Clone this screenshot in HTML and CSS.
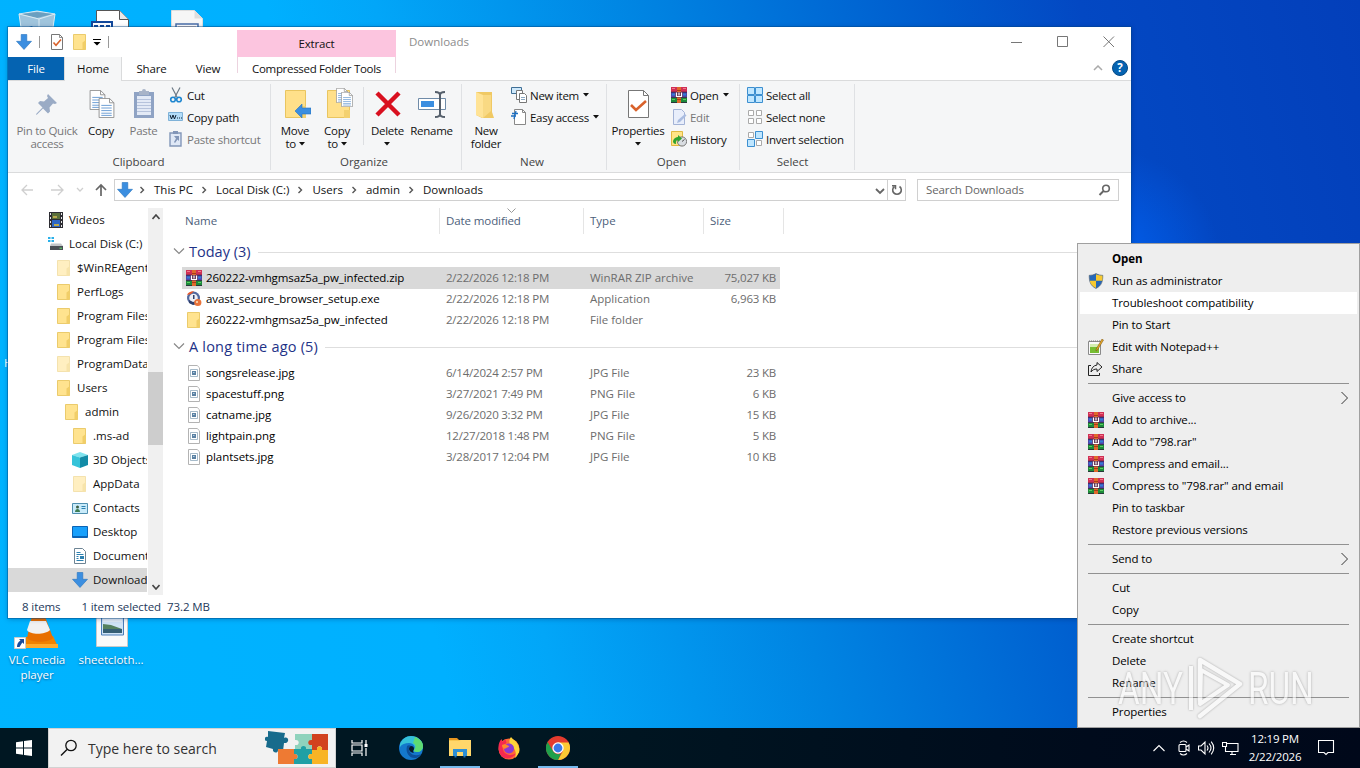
FILE: index.html
```html
<!DOCTYPE html>
<html lang="en">
<head>
  <meta charset="UTF-8">
  <meta name="viewport" content="width=device-width, initial-scale=1.0">
  <title>Downloads</title>
  <link rel="stylesheet" href="styles.css">
</head>
<body>
  <!-- shared icons -->
  <svg class="sprite">
    <symbol id="i-rar" viewBox="0 0 16 16">
      <path fill="#d02f54" d="M0 0h16v5H0z"/><path fill="#5044a8" d="M0 5h16v5.500H0z"/><path fill="#1d8a3a" d="M0 10.500h16V16H0z"/>
      <path fill="#2b1c3a" d="M0 4.800h16v.8H0zM0 10.200h16v.8H0zM0 15.200h16v.8H0z"/>
      <path fill="#f0788a" d="M1 1h3v1H1zM12 1h3v1h-3z"/><path fill="#2f7fd6" d="M1 6.500h3v2H1zM12 6.500h3v2h-3z"/><path fill="#5ccf5f" d="M1 12h3v1H1zM12 12h3v1h-3z"/>
      <path fill="#e06a2b" d="M6 0h4v16H6z"/><path fill="#a83a1c" d="M6 3h4v1H6zM6 12h4v1H6z"/><path fill="#5e2c4c" d="M4.500 5h7v5.500h-7z"/>
      <path fill="none" stroke="#fff" stroke-width="1.200" d="M5.500 5.500v4.500M5.500 9.500h5v-4M8 5.500v3"/>
    </symbol>
    <symbol id="i-folder" viewBox="0 0 16 16">
      <path fill="#ffe38f" stroke="#e6c254" stroke-width=".8" d="M1.500.500h12v15h-12z"/><path fill="#f1ce68" d="M10.500 8.500 13.800 6v9.600h-3.300z"/>
    </symbol>
    <symbol id="i-down" viewBox="0 0 16 16">
      <path fill="#3b8ee0" stroke="#2572bd" stroke-width=".6" d="M5.200.500h5.600v6.800h4.700L8 15.500.500 7.300h4.700z"/>
    </symbol>
    <symbol id="i-check" viewBox="0 0 16 16">
      <path fill="#fff" stroke="#777" d="M2.500.500h8l3 3v12h-11z"/><path fill="none" stroke="#777" stroke-width=".8" d="M10.500.500v3h3"/><path fill="none" stroke="#d9622b" stroke-width="1.600" d="m4.500 8.500 2.500 2.700L12 5.500"/>
    </symbol>
    <symbol id="i-img" viewBox="0 0 16 16">
      <path fill="#fff" stroke="#b3b3b3" d="M2.500.500h8.700l2.300 2.300v12.700h-11z"/><path fill="#fff" stroke="#8fa9bd" stroke-width=".8" d="M4.500 4.500h7v7h-7z"/><path fill="#5a80a2" d="M6 6h4v4H6z"/><path fill="#b4d1e6" d="M7 7h1.500v1H7z"/>
    </symbol>
    <symbol id="i-chev" viewBox="0 0 10 10"><path fill="none" stroke="currentColor" stroke-width="1.400" d="m3.500 2 3 3-3 3"/></symbol>
    <symbol id="i-vee" viewBox="0 0 12 12"><path fill="none" stroke="currentColor" stroke-width="1.200" d="m1 3.500 5 5 5-5"/></symbol>
    <symbol id="i-tri" viewBox="0 0 6 4"><path fill="#111" d="M0 0h6L3 3.500z"/></symbol>
    <symbol id="i-page" viewBox="0 0 18 23">
      <path fill="#fff" stroke="#888" d="M.500.500h12l5 5v17H.500z"/><path fill="none" stroke="#888" d="M12.500.500v5h5"/><path stroke="#5b93cf" d="M3 8.500h12M3 11.500h12M3 14.500h12M3 17.500h12M3 20h12"/>
    </symbol>
  </svg>

  <div class="desktop">
    <!-- desktop shortcuts -->
    <svg class="desk-icon bin" viewBox="0 0 38 40"><path fill="#9fc4dc" stroke="#dcebf3" d="m1 4 18-3 18 3-5 34H6z"/><path fill="#6a9fc0" d="m3 4 16-2 16 2-16 4z"/><path fill="none" stroke="#dcebf3" d="m1 4 20 5 16-5M21 9v30"/><path fill="#1f6fb2" d="M8 18l6-2 4 6-8 4z"/></svg>
    <svg class="desk-icon rtf" viewBox="0 0 38 40"><path fill="#fff" stroke="#555" d="M5.500.500h23l9 9v30h-32z"/><path fill="#e8e8e8" stroke="#555" d="M28.500.500v9h9"/><path fill="#12489c" d="M0 11h22v14H0z"/><path fill="#fff" d="M2 13h18v8H2z"/><path fill="#12489c" d="M3 15h4v2H3zM9 15h4v2H9zM15 15h4v2h-4z"/></svg>
    <svg class="desk-icon doc" viewBox="0 0 32 40"><path fill="#f6f6f6" stroke="#ddd" d="M.500.500h23l8 8v31H.500z"/><path fill="#ddd" d="M23.500.500v8h8z"/><path fill="#fff" stroke="#4a6ea8" stroke-width="1.500" d="M5 14h22v16H5z"/><path stroke="#d08a6a" d="M7 17h18"/></svg>
    <span class="desk-peek">H</span>
    <div class="shortcut vlc">
      <svg viewBox="0 0 46 38" width="46" height="38"><path fill="#f08200" d="m13 26-5 10h38l-5-11z"/><path fill="#ffab2b" d="M7 33h39l1 4H6z"/><path fill="#e86f00" d="M21 0h10l10 27c-4 5-22 5-26 0z"/><path fill="#f1f1f1" d="M18 10h16l4 9c-5 5-20 5-23 0z"/><path fill="#f1f1f1" d="M21 0h10l1 2H20z"/><path fill="#fff" stroke="#ccc" d="M2.500 26.500h11v11h-11z"/><path fill="#1a4c9c" d="M7 28h5v5l-1.700-1.500L7.500 36H5c0-3 1-5 3.500-6.500z"/></svg>
      <span>VLC media<br>player</span>
    </div>
    <div class="shortcut sheet">
      <svg viewBox="0 0 46 38" width="46" height="38"><path fill="#fafafa" stroke="#c9c9c9" d="M7.500-2h31v37.500h-31z"/><path fill="#cfe3f6" stroke="#4b7db8" d="M12.500-1h22v25h-22z"/><path fill="#e4eef8" d="M14 5h19v6H14z"/><path fill="#55805f" d="M14 13l8 1 11 4v2H14z"/><path fill="#355e74" d="M14 18h19v4H14z"/></svg>
      <span>sheetcloth...</span>
    </div>

    <!-- explorer window -->
    <div class="window">
      <div class="titlebar">
        <div class="quick">
          <svg width="16" height="16"><use href="#i-down"/></svg>
          <i class="bar"></i>
          <svg class="q1" width="16" height="16"><use href="#i-check"/></svg>
          <svg class="q2" width="16" height="16"><use href="#i-folder"/></svg>
          <svg class="q3" width="8" height="7" viewBox="0 0 8 7"><path d="M0 0h8v1H0zM.500 3h7L4 6.500z"/></svg>
          <i class="bar"></i>
        </div>
        <div class="context">Extract</div>
        <div class="caption">Downloads</div>
        <div class="controls">
          <svg width="12" height="12" viewBox="0 0 12 12"><path d="M0 6.500h11"/></svg>
          <svg width="12" height="12" viewBox="0 0 12 12"><path d="M.500.500h10v10H.500z"/></svg>
          <svg width="12" height="12" viewBox="0 0 12 12"><path d="m.500.500 10.500 10.500M11 .500.500 11"/></svg>
        </div>
      </div>
      <div class="tabs">
        <span class="tab file">File</span><span class="tab home">Home</span><span class="tab share">Share</span><span class="tab view">View</span><span class="tab tools">Compressed Folder Tools</span>
        <svg class="fold" width="10" height="6" viewBox="0 0 10 6"><path fill="none" stroke="#aaa" stroke-width="1.500" d="m1 5 4-4 4 4"/></svg>
        <span class="help">?</span>
      </div>

      <div class="ribbon">
        <div class="group g-clip">
          <div class="tools-row">
            <div class="big w66 off"><svg width="32" height="32" viewBox="0 0 32 32"><path fill="#9aabc5" d="m17 6 9 9-2 1-2-.500-3.500 4 .500 4-2 2-5-5-6 6-1 .500.500-1.500 6-6-4.500-4.500 2-2 4 .500L17 10l-1-2z"/></svg><span>Pin to Quick<br>access</span></div>
            <div class="big w42"><svg width="32" height="32" viewBox="0 0 32 32"><use href="#i-page" x="4" y="2" width="17" height="20"/><use href="#i-page" x="13" y="10" width="17" height="20"/></svg><span>Copy</span></div>
            <div class="big w42 off paste"><svg width="32" height="32" viewBox="0 0 32 32"><path fill="#8fa3c4" d="M6 4h20v26H6z"/><path fill="#e3eaf6" d="M9 8h14v19H9z"/><path fill="#a8b4c8" d="M11 3h3a2 2 0 0 1 4 0h3v4H11z"/><path stroke="#b6c3dc" d="M9 11.500h14M9 14.500h14M9 17.500h14M9 20.500h14M9 23.500h14"/></svg><span>Paste</span></div>
            <div class="smalls s-clip">
              <div><svg width="16" height="16" viewBox="0 0 16 16"><path fill="none" stroke="#6d7a86" stroke-width="1.200" d="M4 .500 9.500 11M12 .500 6.500 11"/><circle cx="5" cy="12.500" r="2.300" fill="none" stroke="#1e86d0" stroke-width="1.600"/><circle cx="11" cy="12.500" r="2.300" fill="none" stroke="#1e86d0" stroke-width="1.600"/></svg><span>Cut</span></div>
              <div><svg width="16" height="16" viewBox="0 0 16 16"><path fill="#b3dcf8" stroke="#7fb2d8" d="M.500 3.500h14v8H.500z"/><path fill="none" stroke="#123" d="m2 6 1.500 4L5 6l1.500 4L8 6"/><path fill="#123" d="M9 8.500h1v1H9zM11 8.500h1v1h-1zM13 8.500h1v1h-1z"/></svg><span>Copy path</span></div>
              <div class="off"><svg width="16" height="16" viewBox="0 0 16 16"><path fill="#dfe8f6" stroke="#8296b8" stroke-width="1.400" d="M2 2h11v13H2z"/><path fill="#8296b8" d="M5 0h5v3H5zM6 5h5v5L9.500 8.500 7 12l-1-1 2-3.500z"/></svg><span>Paste shortcut</span></div>
            </div>
          </div>
          <div class="group-name">Clipboard</div>
        </div>
        <div class="group g-org">
          <div class="tools-row">
            <div class="big w42"><svg width="32" height="32" viewBox="0 0 32 32"><path fill="#ffe08a" stroke="#e9c560" d="M6.500 2.500h20v27h-20z"/><path fill="#f3d170" d="M21 18h6v12h-6z"/><path fill="#3b8ee0" stroke="#2572bd" stroke-width=".6" d="m16 23 7-7v4h9v6h-9v4z"/></svg><span>Move<br>to <svg class="tri"><use href="#i-tri"/></svg></span></div>
            <div class="big w42"><svg width="32" height="32" viewBox="0 0 32 32"><path fill="#ffe08a" stroke="#e9c560" d="M6.500 2.500h22v27h-22z"/><path fill="#f3d170" d="M23 22h6v8h-6z"/><use href="#i-page" x="15" y="0" width="12" height="15"/><use href="#i-page" x="20" y="4" width="12" height="15"/></svg><span>Copy<br>to <svg class="tri"><use href="#i-tri"/></svg></span></div>
            <i class="vsep"></i>
            <div class="big w43"><svg width="32" height="32" viewBox="0 0 32 32"><path stroke="#d9101f" stroke-width="4.500" d="m5 5 22 22M27 5 5 27"/></svg><span>Delete<br><svg class="tri"><use href="#i-tri"/></svg></span></div>
            <div class="big w45"><svg width="32" height="32" viewBox="0 0 32 32"><path fill="#fff" stroke="#6f8ba8" d="M2.500 10.500h27v11h-27z"/><path fill="#3b8ee0" d="M5 13h13v6H5z"/><path fill="none" stroke="#555f6b" stroke-width="2" d="M19 4c3 0 5 1 5 3 0-2 2-3 5-3M24 6v21M19 29c3 0 5-1 5-3 0 2 2 3 5 3"/></svg><span>Rename</span></div>
          </div>
          <div class="group-name">Organize</div>
        </div>
        <div class="group g-new">
          <div class="tools-row">
            <div class="big w42"><svg width="32" height="32" viewBox="0 0 32 32"><path fill="#f0c964" d="M6 4h16v20l2 6H12l-6-3z"/><path fill="#ffe396" d="m6 4 7 3v23l-7-3z"/><path fill="#f9d983" d="M13 7h8v16l-8 7z"/></svg><span>New<br>folder</span></div>
            <div class="smalls s-new">
              <div><svg width="17" height="16" viewBox="0 0 17 16"><path fill="#cfe9fb" stroke="#3f6f96" d="M.500.500h10v6H.500z"/><path fill="#fff" stroke="#777" d="M5.500 3.500h6v9h-6z"/><path fill="#fff" stroke="#777" d="M8.500 6.500h5l2 2v7h-7z"/><path stroke="#8aa8c2" d="M10 10.500h4M10 12.500h4"/></svg><span>New item</span><svg class="tri"><use href="#i-tri"/></svg></div>
              <div><svg width="17" height="16" viewBox="0 0 17 16"><path fill="#fff" stroke="#888" d="M3.500.500h8l3 3v12h-11z"/><path fill="none" stroke="#888" d="M11.500.500v3h3"/><path stroke="#1e6fc0" stroke-width="1.300" d="M1 4.500h6M0 7h5M5 2 3 10"/></svg><span>Easy access</span><svg class="tri"><use href="#i-tri"/></svg></div>
            </div>
          </div>
          <div class="group-name">New</div>
        </div>
        <div class="group g-open">
          <div class="tools-row">
            <div class="big w54"><svg width="32" height="32" viewBox="0 0 32 32"><path fill="#fff" stroke="#777" d="M6.500 2.500h15l5 5v22h-20z"/><path fill="none" stroke="#777" d="M21.500 2.500v5h5"/><path fill="none" stroke="#d9622b" stroke-width="2.600" d="m9 17 5 5 10-9"/></svg><span>Properties<br><svg class="tri"><use href="#i-tri"/></svg></span></div>
            <div class="smalls s-open">
              <div><svg width="16" height="16"><use href="#i-rar"/></svg><span>Open</span><svg class="tri"><use href="#i-tri"/></svg></div>
              <div class="off"><svg width="16" height="16" viewBox="0 0 16 16"><path fill="#e8eefb" stroke="#a3b3d6" d="M2.500.500h8l3 3v12h-11z"/><path fill="#a9bce0" d="M14 5l1.500 1.500L9 13l-3 1 1-3z"/></svg><span>Edit</span></div>
              <div><svg width="16" height="16" viewBox="0 0 16 16"><path fill="#ffe487" stroke="#e0b940" d="M.500.500h11v14H.500z"/><circle cx="11" cy="10.500" r="4.600" fill="#d9dde2" stroke="#777"/><path stroke="#555" d="m11 10.500 2.500-2"/><path fill="#2fa32f" d="M2 10c1-3 3-4 5-4V4l4 3.500L7 11V9c-1.500 0-2.500 1-2 4-2 0-3-1-3-3z"/></svg><span>History</span></div>
            </div>
          </div>
          <div class="group-name">Open</div>
        </div>
        <div class="group g-sel">
          <div class="tools-row">
            <div class="smalls s-sel">
              <div><svg width="16" height="16" viewBox="0 0 16 16"><path fill="#bfe6ff" stroke="#3c8fd0" d="M.500.500h7v7h-7zM8.500.500h7v7h-7zM.500 8.500h7v7h-7zM8.500 8.500h7v7h-7z"/></svg><span>Select all</span></div>
              <div><svg width="16" height="16" viewBox="0 0 16 16"><path fill="#fff" stroke="#aaa" d="M1.500 1.500h5v5h-5zM9.500 1.500h5v5h-5zM1.500 9.500h5v5h-5zM9.500 9.500h5v5h-5z"/></svg><span>Select none</span></div>
              <div><svg width="16" height="16" viewBox="0 0 16 16"><path fill="#fff" stroke="#aaa" d="M1.500 1.500h5v5h-5zM9.500 9.500h5v5h-5z"/><path fill="#bfe6ff" stroke="#3c8fd0" d="M8.500.500h7v7h-7zM.500 8.500h7v7h-7z"/></svg><span>Invert selection</span></div>
            </div>
          </div>
          <div class="group-name">Select</div>
        </div>
      </div>

      <div class="address">
        <svg class="nav-arrows" width="100" height="16" viewBox="0 0 100 16"><g fill="none" stroke="#cfcfcf" stroke-width="1.300"><path d="M12 8H1M6 3 1 8l5 5M30 8h12M37 3l5 5-5 5"/><path d="m56 6 3 3 3-3"/></g><path fill="none" stroke="#666" stroke-width="1.700" d="M80 14V3M75 8l5-5 5 5"/></svg>
        <div class="path">
          <svg class="drive" width="16" height="16"><use href="#i-down"/></svg>
          <svg class="sep"><use href="#i-chev"/></svg><span>This PC</span>
          <svg class="sep"><use href="#i-chev"/></svg><span>Local Disk (C:)</span>
          <svg class="sep"><use href="#i-chev"/></svg><span>Users</span>
          <svg class="sep"><use href="#i-chev"/></svg><span>admin</span>
          <svg class="sep"><use href="#i-chev"/></svg><span>Downloads</span>
          <svg class="drop" width="10" height="10" viewBox="0 0 10 10"><path fill="none" stroke="#666" stroke-width="1.800" d="m1 3 4 4 4-4"/></svg>
          <svg class="reload" width="17" height="19" viewBox="0 0 17 19"><path fill="none" stroke="#666" stroke-width="1.600" d="M11.500 6a4.300 4.300 0 1 1-5 0"/><path fill="none" stroke="#666" stroke-width="1.500" d="M4 5.200h3.500v3.600"/></svg>
        </div>
        <div class="search"><span>Search Downloads</span><svg width="14" height="14" viewBox="0 0 14 14"><circle cx="8" cy="5.500" r="3.300" fill="none" stroke="#666" stroke-width="1.600"/><path stroke="#666" stroke-width="2" d="m5.500 8-4 4"/></svg></div>
      </div>

      <div class="body">
        <div class="tree">
          <div class="node l0"><svg width="16" height="16" viewBox="0 0 16 16"><path fill="#2d2d33" d="M1 0h14v16H1z"/><path fill="#e8e8e8" d="M2 1h1v2H2zM2 5h1v2H2zM2 9h1v2H2zM2 13h1v2H2zM13 1h1v2h-1zM13 5h1v2h-1zM13 9h1v2h-1zM13 13h1v2h-1z"/><path fill="#5a6f3a" d="M4 1h8v6H4z"/><path fill="#2b66c4" d="M4 8h8v7H4z"/><path fill="#b9a94d" d="M5 4h4v2H5zM6 12h5v2H6z"/></svg><span>Videos</span></div>
          <div class="node l0"><svg width="16" height="16" viewBox="0 0 16 16"><path fill="#29b0ea" d="M0 1h2.500v2H0zM3.500 1H6v2H3.500zM0 4h2.500v2H0zM3.500 4H6v2H3.500z"/><path fill="#c2c5c8" d="M3 7.500h10l2 2.500H2z"/><path fill="#4a4f55" d="M2 10h13v4H2z"/><path fill="#5fe06a" d="M11.500 11.700H14v1h-2.500z"/></svg><span>Local Disk (C:)</span></div>
          <div class="node l1 dim"><svg width="16" height="16"><use href="#i-folder"/></svg><span>$WinREAgent</span></div>
          <div class="node l1"><svg width="16" height="16"><use href="#i-folder"/></svg><span>PerfLogs</span></div>
          <div class="node l1"><svg width="16" height="16"><use href="#i-folder"/></svg><span>Program Files</span></div>
          <div class="node l1"><svg width="16" height="16"><use href="#i-folder"/></svg><span>Program Files</span></div>
          <div class="node l1 dim"><svg width="16" height="16"><use href="#i-folder"/></svg><span>ProgramData</span></div>
          <div class="node l1"><svg width="16" height="16"><use href="#i-folder"/></svg><span>Users</span></div>
          <div class="node l2"><svg width="16" height="16"><use href="#i-folder"/></svg><span>admin</span></div>
          <div class="node l3"><svg width="16" height="16"><use href="#i-folder"/></svg><span>.ms-ad</span></div>
          <div class="node l3"><svg width="16" height="16" viewBox="0 0 16 16"><path fill="#7fe3ee" d="m0 3 8-3 8 3-8 2.500z"/><path fill="#35c3d9" d="m0 3 8 2.500V16l-8-3z"/><path fill="#128ba6" d="m16 3-8 2.500V16l8-3z"/></svg><span>3D Objects</span></div>
          <div class="node l3 dim"><svg width="16" height="16"><use href="#i-folder"/></svg><span>AppData</span></div>
          <div class="node l3"><svg width="16" height="16" viewBox="0 0 16 16"><path fill="#c9ebfa" stroke="#4f8fb0" d="M.500 3.500h15v10H.500z"/><circle cx="5.500" cy="7" r="1.500" fill="#3d5d43"/><path fill="#3d7d53" d="M3 12c0-4 5-4 5 0z"/><path stroke="#2c80b0" d="M9.500 6.500h4M9.500 8.500h4"/></svg><span>Contacts</span></div>
          <div class="node l3"><svg width="16" height="16" viewBox="0 0 16 16"><path fill="#18a0fb" stroke="#0b63b5" d="M.500 2.500h15v11H.500z"/><path fill="#0b63b5" d="M1 12h14v1H1z"/></svg><span>Desktop</span></div>
          <div class="node l3"><svg width="16" height="16" viewBox="0 0 16 16"><path fill="#fff" stroke="#6d8494" d="M2.500.500h8l3 3v12h-11z"/><path stroke="#2c80b0" d="M4.500 4.500h4M4.500 6.500h7M4.500 8.500h2M4.500 10.500h2M4.500 12.500h7"/><path fill="#2c80b0" d="M8 8h4v3H8z"/></svg><span>Documents</span></div>
          <div class="node l3 current"><svg width="16" height="16"><use href="#i-down"/></svg><span>Downloads</span></div>
        </div>
        <div class="scroll">
          <svg width="8" height="6" viewBox="0 0 8 6"><path d="m.500 5 3.500-4 3.500 4"/></svg>
          <i class="thumb"></i>
          <svg width="8" height="6" viewBox="0 0 8 6"><path d="m.500 1 3.500 4 3.500-4"/></svg>
        </div>
        <div class="files">
          <div class="cols"><span>Name</span><span>Date modified<svg width="9" height="6" viewBox="0 0 9 6"><path fill="none" stroke="#999" d="m.500.500 4 4 4-4"/></svg></span><span>Type</span><span>Size</span></div>
          <div class="section"><svg><use href="#i-vee"/></svg><span>Today (3)</span></div>
          <div class="row selected"><svg><use href="#i-rar"/></svg><span>260222-vmhgmsaz5a_pw_infected.zip</span><span>2/22/2026 12:18 PM</span><span>WinRAR ZIP archive</span><span>75,027 KB</span></div>
          <div class="row"><svg viewBox="0 0 16 16"><circle cx="7.500" cy="7" r="6.500" fill="#53699f"/><circle cx="7.500" cy="7" r="4.300" fill="#eef0f6"/><path fill="#e9582b" d="M1 4C2 1 5 0 8 .200L5 3z"/><path fill="#30406c" d="M7 4h1.500v4H7zM3 9l4 2 4-1v3l-4 1-4-2z"/><circle cx="11.800" cy="11.500" r="3.600" fill="#e9733a"/><path fill="#f8c9a0" d="M10 10h2v2h-2z"/></svg><span>avast_secure_browser_setup.exe</span><span>2/22/2026 12:18 PM</span><span>Application</span><span>6,963 KB</span></div>
          <div class="row"><svg><use href="#i-folder"/></svg><span>260222-vmhgmsaz5a_pw_infected</span><span>2/22/2026 12:18 PM</span><span>File folder</span><span></span></div>
          <div class="section second"><svg><use href="#i-vee"/></svg><span>A long time ago (5)</span></div>
          <div class="row"><svg><use href="#i-img"/></svg><span>songsrelease.jpg</span><span>6/14/2024 2:57 PM</span><span>JPG File</span><span>23 KB</span></div>
          <div class="row"><svg><use href="#i-img"/></svg><span>spacestuff.png</span><span>3/27/2021 7:49 PM</span><span>PNG File</span><span>6 KB</span></div>
          <div class="row"><svg><use href="#i-img"/></svg><span>catname.jpg</span><span>9/26/2020 3:32 PM</span><span>JPG File</span><span>15 KB</span></div>
          <div class="row"><svg><use href="#i-img"/></svg><span>lightpain.png</span><span>12/27/2018 1:48 PM</span><span>PNG File</span><span>5 KB</span></div>
          <div class="row"><svg><use href="#i-img"/></svg><span>plantsets.jpg</span><span>3/28/2017 12:04 PM</span><span>JPG File</span><span>10 KB</span></div>
        </div>
      </div>
      <div class="status"><span>8 items</span><span>1 item selected</span><span>73.2 MB</span></div>
    </div>

    <!-- context menu -->
    <div class="menu">
      <div class="item bold">Open</div>
      <div class="item"><svg viewBox="0 0 16 16"><path fill="#2668b8" stroke="#55606c" stroke-width=".6" d="M8 .500c2 1.300 4.500 1.800 6.800 1.800C14.800 8 14 12.500 8 15.500 2 12.500 1.200 8 1.200 2.300 3.500 2.300 6 1.800 8 .500z"/><path fill="#f8c930" d="M8 1.200v6.600h6.300c.200-1.500.300-3.500.200-5.200-2-.100-4.500-.400-6.500-1.400zM8 7.800H1.800C2.300 10.800 4 13.300 8 15z"/></svg>Run as administrator</div>
      <div class="item hover">Troubleshoot compatibility</div>
      <div class="item">Pin to Start</div>
      <div class="item"><svg viewBox="0 0 16 16"><path fill="#fafafa" stroke="#8a8a8a" d="M.500 2.500h12v13H.500z"/><path fill="#76bd32" d="M2 8h9v6H2z"/><path fill="#d4eeb0" d="M2 5h9v3H2z"/><path stroke="#777" stroke-dasharray="1" d="M1 2h11"/><path fill="#e9a825" stroke="#6d4a10" stroke-width=".5" d="m14 0 1.500 1L9.500 11 8 12l.200-2z"/></svg>Edit with Notepad++</div>
      <div class="item"><svg viewBox="0 0 16 16"><path fill="none" stroke="#222" d="M3 4.500H.500v10h11V12M9 1.500 14 6 9 10.500V8C6 8 4.500 9 3 11c.300-4 2.500-6.500 6-7z"/></svg>Share</div>
      <hr>
      <div class="item more">Give access to<svg viewBox="0 0 10 14"><path d="m1.500 1 6 6-6 6"/></svg></div>
      <div class="item"><svg><use href="#i-rar"/></svg>Add to archive...</div>
      <div class="item"><svg><use href="#i-rar"/></svg>Add to "798.rar"</div>
      <div class="item"><svg><use href="#i-rar"/></svg>Compress and email...</div>
      <div class="item"><svg><use href="#i-rar"/></svg>Compress to "798.rar" and email</div>
      <div class="item">Pin to taskbar</div>
      <div class="item">Restore previous versions</div>
      <hr>
      <div class="item more">Send to<svg viewBox="0 0 10 14"><path d="m1.500 1 6 6-6 6"/></svg></div>
      <hr>
      <div class="item">Cut</div>
      <div class="item">Copy</div>
      <hr>
      <div class="item">Create shortcut</div>
      <div class="item">Delete</div>
      <div class="item">Rename</div>
      <hr>
      <div class="item">Properties</div>
    </div>

    <div class="watermark">
      <span>ANY</span>
      <svg width="58" height="66" viewBox="0 0 58 66"><path fill="none" stroke="#fff" stroke-width="4.500" stroke-linejoin="round" stroke-linecap="round" d="M14 44V4l40 24-40 32"/><path fill="none" stroke="#fff" stroke-width="4" stroke-linejoin="round" d="M5 54V10M15 14l27 15-28 19z"/></svg>
      <span>RUN</span>
    </div>
  </div>

  <div class="taskbar">
    <div class="start"><svg width="16" height="16" viewBox="0 0 16 16"><path fill="#fff" d="m0 2.200 7-1v6.300H0zM8 1l8-1v7.500H8zM0 8.500h7v6.300l-7-1zM8 8.500h8V16l-8-1z"/></svg></div>
    <div class="tb-search">
      <svg width="18" height="18" viewBox="0 0 18 18"><circle cx="11" cy="6.500" r="5.200" fill="none" stroke="#111" stroke-width="1.300"/><path stroke="#111" stroke-width="1.400" d="m7 10.500-6 6"/></svg>
      <span>Type here to search</span>
      <svg class="puzzle" width="64" height="38" viewBox="0 0 64 38"><path fill="#176b8c" d="m3 2 17 2-1 5c4-2 6 3 2 5l-2 0-1 8-5-1c0 4-6 3-5-1l-7-2 1-6c-4 0-3-5 1-4z"/><path fill="#8fd3bd" d="M30 5h17v17h-6c0-4-5-4-5 0h-6v-6c5 1 5-6 0-5z"/><path fill="#d2421f" d="M47 5h16v16h-6c1-5-6-5-5 0h-5v-5c-5 1-5-6 0-5z"/><path fill="#ee7a33" d="M13 20h16v5c5-1 5 6 0 5v5H13z"/><path fill="#1fa0a5" d="M29 20h7c-1-4 6-4 5 0h6v5c-5-1-5 6 0 5v5H29v-5c5 1 5-6 0-5z"/><path fill="#f8b425" d="M47 21h5c-1-5 6-5 5 0h6v14H47v-5c-5 1-5-6 0-5z"/></svg>
    </div>
    <div class="tb-app"><svg width="18" height="18" viewBox="0 0 18 18"><path fill="none" stroke="#fff" stroke-width="1.200" d="M1 1v3h10V1M1 6h10v6H1zM1 17v-3h10v3M15 1v4M15 9v8"/><path fill="#fff" d="M13.500 5h3v3h-3z"/></svg></div>
    <div class="tb-app"><svg width="24" height="24" viewBox="0 0 24 24"><circle cx="12" cy="12" r="12" fill="#1478cc"/><path fill="#35c1d8" d="M1 8C3 3 7 0 12 0c7 0 12 5 12 10 0 4-3 6-6 6-2 0-4-1-3-2 2-3 0-7-5-7-4 0-7 1-9 4z"/><path fill="#5edb72" d="M16 1c5 2 8 5 8 9 0 4-3 6-6 6-2 0-4-1-3-2 3-4 1-6-1-7z"/><path fill="#0c4f9a" d="M8 10c-2 7 3 13 9 12 2-.500 4-2 5-4-6 3-12 0-12-5 0-2 1-3 2-3-1-1-3-1-4 0z"/><path fill="#06182a" d="M12 10c-3 1-3 6 3 7-2-2 0-3 0-4 0-2-1-3-3-3z"/></svg></div>
    <div class="tb-app open"><svg width="22" height="20" viewBox="0 0 22 20"><path fill="#e79620" d="M0 0h8l2 2H0z"/><path fill="#ffd76b" d="M0 2h22v16H0z"/><path fill="#f7c64f" d="M0 3h10l2-1H0z"/><path fill="#2d8fd5" d="M4 11h14v7h-4v-4H8v4H4z"/><path fill="#1b6fb5" d="M5.500 18h2v1.500h-2zM14.500 18h2v1.500h-2z"/></svg></div>
    <div class="tb-app"><svg width="24" height="24" viewBox="0 0 24 24"><circle cx="12" cy="13" r="10.500" fill="#ff6a35"/><path fill="#f5294f" d="M1.500 11c0-3 1-6 3-8l1 3 3-3 1 4-4 3c0 9 8 11 14 7-5 8-18 8-18-6z"/><path fill="#ffd43a" d="M14 1c1 2 4 3 6 6 2 3 3 7 2 10-1-1-1 3-4 5 2-5 0-11-5-13-1-3-1-6 1-8z"/><circle cx="12" cy="12.500" r="5" fill="#8d38d4"/><path fill="#ff8a2a" d="M5 9c3-2 5 0 7 1 0 2-3 1-4 3-2-1-3-2-3-4z"/></svg></div>
    <div class="tb-app open"><svg width="24" height="24" viewBox="0 0 24 24"><circle cx="12" cy="12" r="12" fill="#e33b2e"/><path fill="#fcc934" d="M12 6.500h10.700A12 12 0 0 1 12 24l5-9z"/><path fill="#1fa04b" d="M1.600 6 7 15c1.500 3 5 4 8 2.500L12 24A12 12 0 0 1 1.600 6z"/><circle cx="12" cy="12" r="5.700" fill="#fff"/><circle cx="12" cy="12" r="4.400" fill="#3a78e8"/></svg></div>
    <div class="tray">
      <svg width="12" height="16" viewBox="0 0 12 16"><path d="m.500 11 5.500-5.500L11.500 11"/></svg>
      <svg width="14" height="16" viewBox="0 0 14 16"><rect x="2" y="4.500" width="7" height="7" rx="1"/><path d="m9 7 3-2v6L9 9M3 2.500q3.500-3 7 0M3 13.500q3.500 3 7 0"/></svg>
      <svg width="17" height="16" viewBox="0 0 17 16"><path d="M.500 6H3l4-4v12L3 10H.500zM9 5.500q2 2.500 0 5M11 3.500q4 4.500 0 9M13.200 1.700q5 6.300 0 12.600"/></svg>
      <svg width="17" height="16" viewBox="0 0 17 16"><path d="M5 3.500h11v8H3.500V7M8 14.500h6M10 11.500v3M.500 2.500h4v4h-4z"/></svg>
      <div class="clock">12:19 PM<br>2/22/2026</div>
      <svg class="note" width="17" height="16" viewBox="0 0 17 16"><path d="M.500.500h15v12H10l-2 2-2-2H.500z"/></svg>
    </div>
  </div>
</body>
</html>
```
FILE: styles.css
```css
* {
  box-sizing: border-box;
}
body {
  margin: 0;
  width: 1360px;
  height: 768px;
  overflow: hidden;
  display: flex;
  flex-direction: column;
  font-family: "Open Sans", "Noto Sans", sans-serif;
  font-size: 11.5px;
  line-height: 15px;
  color: #111;
  white-space: nowrap;
  background:
    radial-gradient(circle at 1110px 260px, rgba(0, 105, 255, 0.7), rgba(0, 95, 245, 0) 110px),
    linear-gradient(75deg, #00b4ff 0%, #00b0ff 30%, #02a6f8 37%, #0084e2 54%, #006cd6 65%, #005bcd 73%, #0348c3 82%, #033fba 100%);
}
svg {
  flex: none;
  display: block;
}
.sprite {
  position: absolute;
  width: 0;
  height: 0;
}
.desktop {
  position: relative;
  height: 728px;
  flex: none;
  overflow: hidden;
}

/* desktop shortcuts */
.desk-icon {
  position: absolute;
  top: 10px;
  height: 40px;
}
.bin { left: 18px; width: 38px; }
.rtf { left: 91px; width: 38px; }
.doc { left: 171px; width: 32px; }
.desk-peek {
  position: absolute;
  left: 4px;
  top: 355px;
  color: #fff;
}
.shortcut {
  position: absolute;
  top: 611px;
  width: 76px;
  display: flex;
  flex-direction: column;
  align-items: center;
  color: #fff;
  text-align: center;
  text-shadow: 0 1px 2px rgba(0, 40, 90, 0.6);
}
.shortcut span {
  margin-top: 3px;
}
.vlc { left: -1px; }
.vlc svg { margin-left: -5px; }
.shortcut.sheet { left: 73px; }
.sheet svg { margin-left: 1px; }

/* window */
.window {
  position: absolute;
  left: 8px;
  top: 27px;
  width: 1123px;
  height: 591px;
  background: #fff;
  box-shadow: 0 0 0 1px rgba(0, 70, 130, 0.4), 0 1px 5px rgba(0, 30, 80, 0.35);
  display: flex;
  flex-direction: column;
}
.titlebar {
  height: 30px;
  display: flex;
}
.quick {
  width: 229px;
  padding: 0 0 1px 8px;
  display: flex;
  align-items: center;
}
.quick .bar {
  width: 1px;
  height: 12px;
  margin-left: 7px;
  background: #999;
}
.q1 { margin-left: 9px; }
.q2 { margin-left: 7px; }
.q3 { margin: 2px 0 0 5px; }
.context {
  width: 159px;
  margin-top: 3px;
  padding-top: 6px;
  text-align: center;
  letter-spacing: -0.2px;
  background: #fcc5df;
}
.caption {
  flex: 1;
  padding: 7px 0 0 13px;
  color: #8c8c8c;
}
.controls {
  width: 120px;
  display: flex;
  gap: 34px;
  padding-top: 9px;
}
.controls path {
  fill: none;
  stroke: #777;
}
.tabs {
  height: 24px;
  display: flex;
  border-bottom: 1px solid #dadbdc;
}
.tab {
  height: 23px;
  line-height: 23px;
  text-align: center;
  letter-spacing: -0.15px;
}
.file { width: 56px; background: #0563b1; color: #fff; }
.home { width: 58px; height: 24px; background: #f5f6f7; border: 1px solid #dadbdc; border-width: 0 1px; }
.share { width: 59px; }
.view { width: 54px; }
.tools { width: 159px; margin-left: 2px; height: 16px; border: 1px solid #ecd3df; border-width: 0 1px; letter-spacing: -0.3px; }
.fold {
  margin: 8px 0 0 697px;
}
.help {
  width: 16px;
  height: 16px;
  margin: 3px 0 0 9px;
  border-radius: 50%;
  background: #0563b1;
  border: 1px solid #054a86;
  color: #fff;
  font-weight: bold;
  line-height: 14px;
  text-align: center;
}

/* ribbon */
.ribbon {
  height: 92px;
  display: flex;
  background: #f5f6f7;
  border-bottom: 1px solid #dadbdc;
  letter-spacing: -0.27px;
}
.group {
  display: flex;
  flex-direction: column;
  margin-top: 3px;
  height: 86px;
  border-right: 1px solid #dfe1e4;
}
.g-clip { width: 263px; padding-left: 6px; }
.g-org { width: 191px; padding-left: 3px; }
.g-new { width: 145px; padding-left: 3px; }
.g-open { width: 133px; padding-left: 4px; }
.g-sel { width: 115px; padding-left: 7px; }
.tools-row {
  display: flex;
  height: 72px;
}
.group-name {
  text-align: center;
  line-height: 16px;
  padding-right: 7px;
  letter-spacing: 0;
  color: #444;
}
.g-sel .group-name { padding-right: 16px; }
.big {
  display: flex;
  flex-direction: column;
  align-items: center;
  text-align: center;
  line-height: 13px;
  padding-top: 4px;
}
.big span {
  margin-top: 4px;
}
.w66 { width: 66px; }
.w42 { width: 42px; }
.w43 { width: 43px; }
.w45 { width: 45px; }
.w54 { width: 54px; }
.paste { padding-left: 1px; }
.off { color: #777; }
.tri {
  width: 6px;
  height: 4px;
  display: inline-block;
  vertical-align: 2px;
}
.vsep {
  width: 1px;
  height: 58px;
  margin: 3px 2px 0 5px;
  background: #dcdee1;
}
.smalls > div {
  height: 22px;
  display: flex;
  align-items: center;
  gap: 3px;
}
.smalls .tri { margin-left: 2px; }
.s-clip { margin-left: 4px; }
.s-new { margin-left: 4px; }
.s-new > div { gap: 2px; }
.s-open { margin-left: 6px; }

/* address bar */
.address {
  height: 35px;
  display: flex;
  padding-top: 6px;
}
.nav-arrows {
  margin: 3px -7px 0 13px;
}
.path {
  width: 792px;
  height: 22px;
  border: 1px solid #d0d0d0;
  display: flex;
  align-items: center;
}
.path span,
.search span {
  margin-top: -2px;
}
.drive { margin: 0 -2px 0 2px; }
.sep {
  width: 10px;
  height: 10px;
  margin: 0 7px 0 6px;
  color: #555;
}
.drop { margin: 2px 2px 0 auto; }
.reload {
  width: 18px;
  height: 20px;
  border-left: 1px solid #d0d0d0;
}
.search {
  width: 202px;
  height: 22px;
  margin-left: 11px;
  padding: 0 6px 0 8px;
  border: 1px solid #d0d0d0;
  display: flex;
  align-items: center;
  justify-content: space-between;
  color: #666;
  letter-spacing: -0.1px;
}

/* body */
.body {
  height: 387px;
  display: flex;
}
.tree {
  width: 139px;
  overflow: hidden;
}
.node {
  height: 24px;
  display: flex;
  align-items: center;
  gap: 5px;
}
.node span { margin-top: -2px; }
.l0 { padding-left: 40px; }
.l1 { padding-left: 48px; }
.l2 { padding-left: 56px; }
.l3 { padding-left: 64px; }
.dim svg { opacity: 0.55; }
.current { background: #d9d9d9; }
.scroll {
  width: 15px;
  margin-left: 1px;
  background: #f0f0f0;
  display: flex;
  flex-direction: column;
  align-items: center;
  padding: 6px 0 5px;
}
.scroll path {
  fill: none;
  stroke: #444;
  stroke-width: 1.6;
}
.thumb {
  width: 15px;
  height: 73px;
  margin: 152px 0 auto;
  background: #cdcdcd;
}
.files {
  flex: 1;
  padding-left: 10px;
}
.cols {
  display: flex;
  height: 26px;
  margin: 0 0 2px 1px;
  color: #4c607a;
}
.cols span {
  padding: 5px 0 0 6px;
  border-right: 1px solid #e5e5e5;
  position: relative;
}
.cols span:nth-child(1) { width: 266px; padding-left: 11px; }
.cols span:nth-child(2) { width: 144px; letter-spacing: -0.1px; }
.cols span:nth-child(3) { width: 120px; }
.cols span:nth-child(4) { width: 80px; }
.cols svg {
  position: absolute;
  left: 67px;
  top: 0;
}
.section {
  height: 30px;
  display: flex;
  align-items: center;
  font-size: 14.5px;
  color: #1e3287;
}
.section svg {
  width: 12px;
  height: 12px;
  margin-right: 4px;
  color: #888;
}
.section::after {
  content: "";
  flex: 1;
  height: 1px;
  margin: 2px 0 0 7px;
  background: #dedede;
}
.section + .row { margin-top: 1px; }
.second { margin-top: 1px; letter-spacing: 0.2px; }
.row {
  width: 598px;
  height: 21px;
  margin-left: 9px;
  padding-left: 4px;
  display: grid;
  grid-template-columns: 20px 240px 144px 110px 1fr;
  align-items: center;
  color: #6d6d6d;
}
.row svg {
  width: 16px;
  height: 16px;
}
.row span:nth-child(2) { color: #000; letter-spacing: -0.1px; }
.row:not(.selected) span:nth-child(2) { letter-spacing: -0.05px; }
.row span:nth-child(3) { letter-spacing: -0.22px; }
.row span:last-child { text-align: right; padding-right: 4px; letter-spacing: -0.2px; }
.selected { background: #d9d9d9; box-shadow: 0 1px #d9d9d9; }
.status {
  height: 23px;
  display: flex;
  padding: 4px 14px;
  color: #1e395b;
  letter-spacing: -0.1px;
}
.status span:nth-child(2) { margin: 0 6px 0 21px; }

/* context menu */
.menu {
  position: absolute;
  left: 1077px;
  top: 243px;
  width: 283px;
  height: 485px;
  padding: 4px 2px;
  background: #eee;
  border: 1px solid #a0a0a0;
  color: #000;
  letter-spacing: -0.1px;
}
.item {
  height: 22px;
  line-height: 22px;
  padding-left: 32px;
  display: flex;
  align-items: center;
}
.item svg {
  width: 16px;
  height: 16px;
  margin: 0 8px 0 -24px;
}
.item.more svg {
  width: 10px;
  height: 14px;
  margin: 0 7px 0 auto;
  fill: none;
  stroke: #333;
}
.bold { font-weight: bold; }
.hover { background: #fff; }
.menu hr {
  height: 1px;
  margin: 3px 8px;
  border: 0;
  background: #919191;
}

.watermark {
  position: absolute;
  left: 1118px;
  top: 656px;
  width: 192px;
  display: flex;
  align-items: center;
  opacity: 0.6;
  color: #fff;
  font: 45px/66px "Roboto", sans-serif;
  text-shadow: 0 0 3px #777;
}
.watermark span {
  width: 64px;
  transform: scaleX(0.74);
  transform-origin: left;
}
.watermark svg {
  margin: 0 4px;
  filter: drop-shadow(0 0 1px #777);
}

/* taskbar */
.taskbar {
  height: 40px;
  display: flex;
  background: linear-gradient(90deg, #001722, #001722 40%, #000b1c 80%, #00081a);
  color: #fff;
}
.start {
  width: 48px;
  display: flex;
  align-items: center;
  justify-content: center;
}
.tb-search {
  width: 288px;
  border: 1px solid #d2d2d2;
  background: #f2f2f2;
  display: flex;
  align-items: center;
  padding-left: 11px;
  color: #333;
  font-size: 14px;
}
.tb-search span { margin-left: 10px; }
.puzzle { margin-left: auto; margin-right: 6px; }
.tb-app {
  width: 40px;
  margin-left: 9px;
  display: flex;
  align-items: center;
  justify-content: center;
}
.tb-search + .tb-app { margin-left: 4px; margin-right: 2px; }
.tb-app.open {
  border-bottom: 2px solid #76b9ed;
  padding-top: 2px;
}
.tray {
  margin-left: auto;
  display: flex;
  align-items: center;
  padding-right: 25px;
}
.tray svg {
  fill: none;
  stroke: #fff;
  stroke-width: 1.1;
  margin-right: 9px;
}
.tray svg:nth-child(2) { margin-left: 3px; margin-right: 7px; }
.tray svg:nth-child(3) { margin-right: 7px; }
.clock {
  width: 54px;
  line-height: 18px;
  text-align: center;
  letter-spacing: -0.2px;
  margin-right: 16px;
}
.tray .note { margin: 0; }
```
